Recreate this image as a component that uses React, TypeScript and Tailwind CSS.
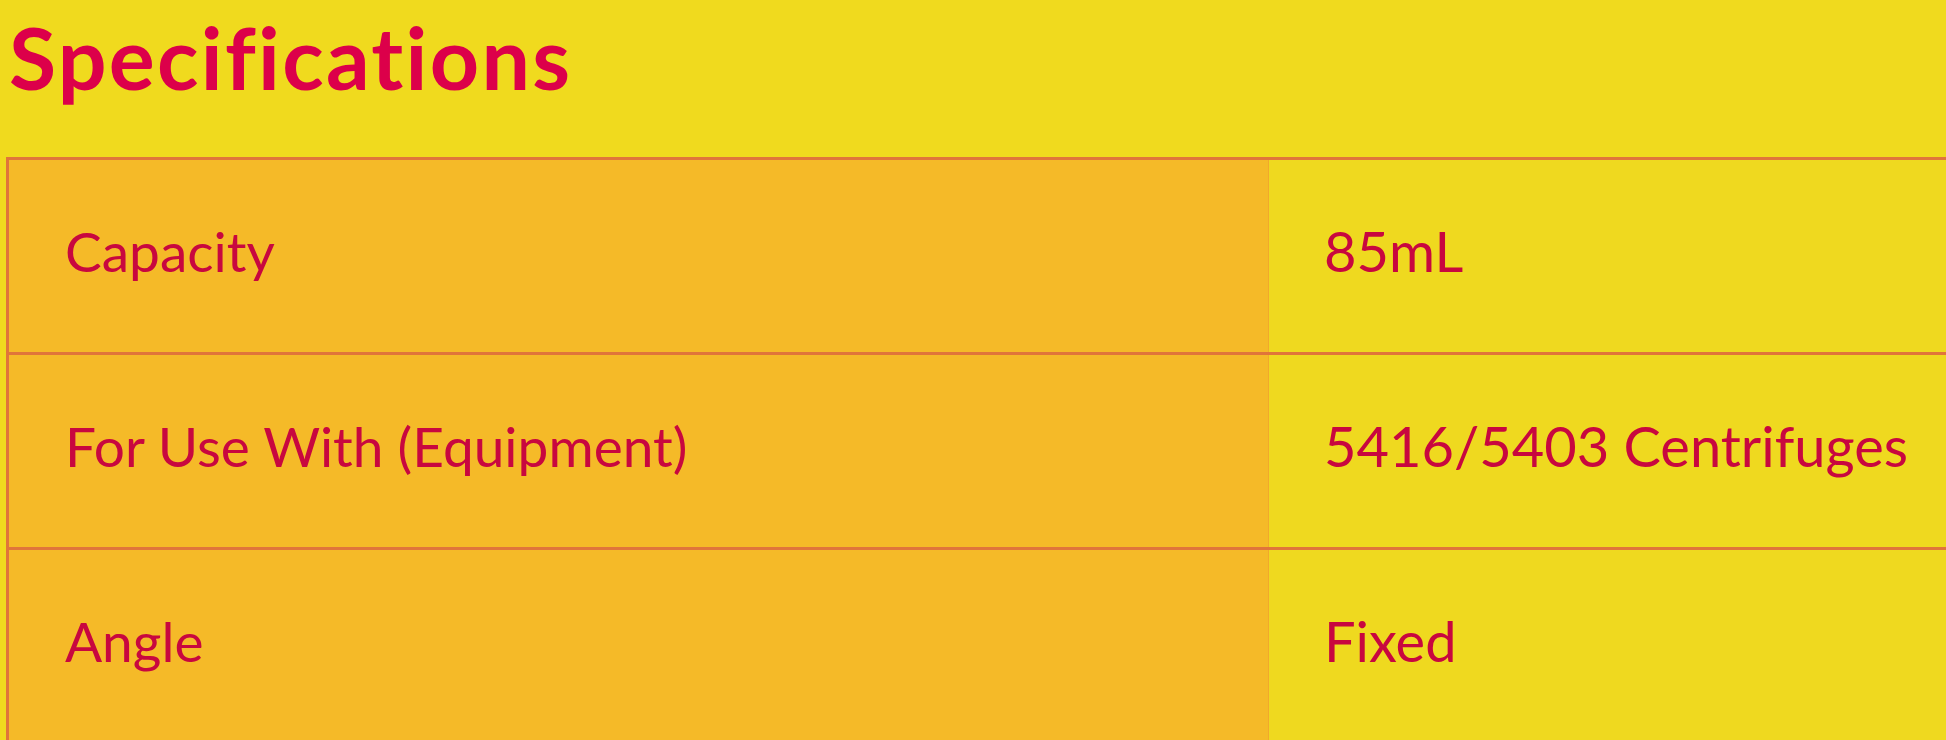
const specs = [
  { label: 'Capacity', value: '85mL' },
  { label: 'For Use With (Equipment)', value: '5416/5403 Centrifuges' },
  { label: 'Angle', value: 'Fixed' },
];

export default function App() {
  return (
    <div className="h-[740px] w-full overflow-hidden bg-[#f0da1e] font-['Lato',sans-serif] [font-variant-ligatures:none]">
      <h2 className="mt-[14px] pl-[9px] text-[86px] font-bold leading-none tracking-[2.3px] text-[#dc004a]">
        Specifications
      </h2>

      <div className="ml-[6px] mt-[57px] border-l-[3px] border-[#e0753a]">
        {specs.map((row) => (
          <div key={row.label} className="flex h-[195px] border-t-[3px] border-[#e0753a]">
            <div className="flex w-[1259px] shrink-0 items-center bg-[#f5ba28] pb-[10px] pl-[56px]">
              <span className="text-[55px] leading-[1.2] text-[#c8073f]">{row.label}</span>
            </div>
            <div className="flex flex-1 items-center border-l border-[#f2a82c] bg-[#efd91f] pb-[10px] pl-[55px]">
              <span className="text-[56px] leading-[1.2] text-[#c8073f]">{row.value}</span>
            </div>
          </div>
        ))}
      </div>
    </div>
  );
}
